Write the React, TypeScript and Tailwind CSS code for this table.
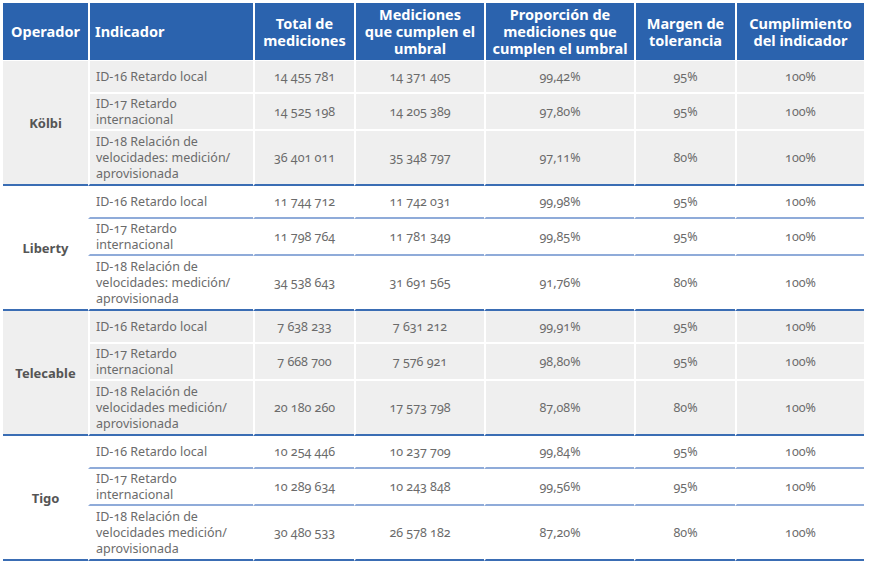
import React from "react";

type Row = { ind: string[]; total: string; cumplen: string; prop: string; margen: string; cumpl: string };
type Group = { op: string; gray: boolean; rows: Row[] };

const groups: Group[] = [
  {
    op: "Kölbi",
    gray: true,
    rows: [
      { ind: ["ID-16 Retardo local"], total: "14 455 781", cumplen: "14 371 405", prop: "99,42%", margen: "95%", cumpl: "100%" },
      { ind: ["ID-17 Retardo", "internacional"], total: "14 525 198", cumplen: "14 205 389", prop: "97,80%", margen: "95%", cumpl: "100%" },
      { ind: ["ID-18 Relación de", "velocidades: medición/", "aprovisionada"], total: "36 401 011", cumplen: "35 348 797", prop: "97,11%", margen: "80%", cumpl: "100%" },
    ],
  },
  {
    op: "Liberty",
    gray: false,
    rows: [
      { ind: ["ID-16 Retardo local"], total: "11 744 712", cumplen: "11 742 031", prop: "99,98%", margen: "95%", cumpl: "100%" },
      { ind: ["ID-17 Retardo", "internacional"], total: "11 798 764", cumplen: "11 781 349", prop: "99,85%", margen: "95%", cumpl: "100%" },
      { ind: ["ID-18 Relación de", "velocidades: medición/", "aprovisionada"], total: "34 538 643", cumplen: "31 691 565", prop: "91,76%", margen: "80%", cumpl: "100%" },
    ],
  },
  {
    op: "Telecable",
    gray: true,
    rows: [
      { ind: ["ID-16 Retardo local"], total: "7 638 233", cumplen: "7 631 212", prop: "99,91%", margen: "95%", cumpl: "100%" },
      { ind: ["ID-17 Retardo", "internacional"], total: "7 668 700", cumplen: "7 576 921", prop: "98,80%", margen: "95%", cumpl: "100%" },
      { ind: ["ID-18 Relación de", "velocidades medición/", "aprovisionada"], total: "20 180 260", cumplen: "17 573 798", prop: "87,08%", margen: "80%", cumpl: "100%" },
    ],
  },
  {
    op: "Tigo",
    gray: false,
    rows: [
      { ind: ["ID-16 Retardo local"], total: "10 254 446", cumplen: "10 237 709", prop: "99,84%", margen: "95%", cumpl: "100%" },
      { ind: ["ID-17 Retardo", "internacional"], total: "10 289 634", cumplen: "10 243 848", prop: "99,56%", margen: "95%", cumpl: "100%" },
      { ind: ["ID-18 Relación de", "velocidades medición/", "aprovisionada"], total: "30 480 533", cumplen: "26 578 182", prop: "87,20%", margen: "80%", cumpl: "100%" },
    ],
  },
];

const rowH = ["h-[33px]", "h-[37px]", "h-[55px]"];

export default function App() {
  return (
    <div
      className="w-[872px] h-[564px] bg-white pt-[3px] pl-[3px] overflow-hidden"
      style={{ fontFamily: '"Noto Sans", "Open Sans", sans-serif' }}
    >
      <table className="border-separate border-spacing-0 table-fixed w-[861px] text-[12.5px] leading-[16px] text-[#6b6b6b] oldstyle-nums">
        <colgroup>
          <col className="w-[85px]" />
          <col className="w-[165px]" />
          <col className="w-[101px]" />
          <col className="w-[130px]" />
          <col className="w-[150px]" />
          <col className="w-[101px]" />
          <col className="w-[129px]" />
        </colgroup>
        <thead>
          <tr className="h-[58px] text-white font-bold text-[14.5px] leading-[17px]">
            <th className="bg-[#2b63ae] border-b border-white text-center align-middle">Operador</th>
            <th className="bg-[#2b63ae] border-b border-l-2 border-white text-left pl-[5px] align-middle">Indicador</th>
            <th className="bg-[#2b63ae] border-b border-l-2 border-white text-center align-middle">
              Total de
              <br />
              mediciones
            </th>
            <th className="bg-[#2b63ae] border-b border-l-2 border-white text-center align-middle">
              Mediciones
              <br />
              que cumplen el
              <br />
              umbral
            </th>
            <th className="bg-[#2b63ae] border-b border-l-2 border-white text-center align-middle">
              Proporción de
              <br />
              mediciones que
              <br />
              cumplen el umbral
            </th>
            <th className="bg-[#2b63ae] border-b border-l-2 border-white text-center align-middle">
              Margen de
              <br />
              tolerancia
            </th>
            <th className="bg-[#2b63ae] border-b border-l-2 border-white text-center align-middle">
              Cumplimiento
              <br />
              del indicador
            </th>
          </tr>
        </thead>
        <tbody>
          {groups.map((g) =>
            g.rows.map((r, i) => {
              const last = i === g.rows.length - 1;
              const bg = g.gray ? "bg-[#efefef]" : "bg-white";
              const bottom = last
                ? "border-b-2 border-b-[#3a6db4]"
                : g.gray
                ? "border-b-2 border-b-white"
                : "border-b-2 border-b-[#8fabd9]";
              const left = g.gray ? "border-l-2 border-l-white" : "border-l-2 border-l-white";
              const cell = `${bg} ${bottom} ${left} text-center align-middle`;
              return (
                <tr key={g.op + i} className={rowH[i]}>
                  {i === 0 && (
                    <td
                      rowSpan={3}
                      className={`${bg} border-b-2 border-b-[#3a6db4] text-center align-middle font-bold text-[13px] text-[#555555]`}
                    >
                      {g.op}
                    </td>
                  )}
                  <td className={`${bg} ${bottom} ${left} text-left align-middle pl-[6px]`}>
                    {r.ind.map((t, k) => (
                      <div key={k}>{t}</div>
                    ))}
                  </td>
                  <td className={cell}>{r.total}</td>
                  <td className={cell}>{r.cumplen}</td>
                  <td className={cell}>{r.prop}</td>
                  <td className={cell}>{r.margen}</td>
                  <td className={cell}>{r.cumpl}</td>
                </tr>
              );
            })
          )}
        </tbody>
      </table>
    </div>
  );
}
